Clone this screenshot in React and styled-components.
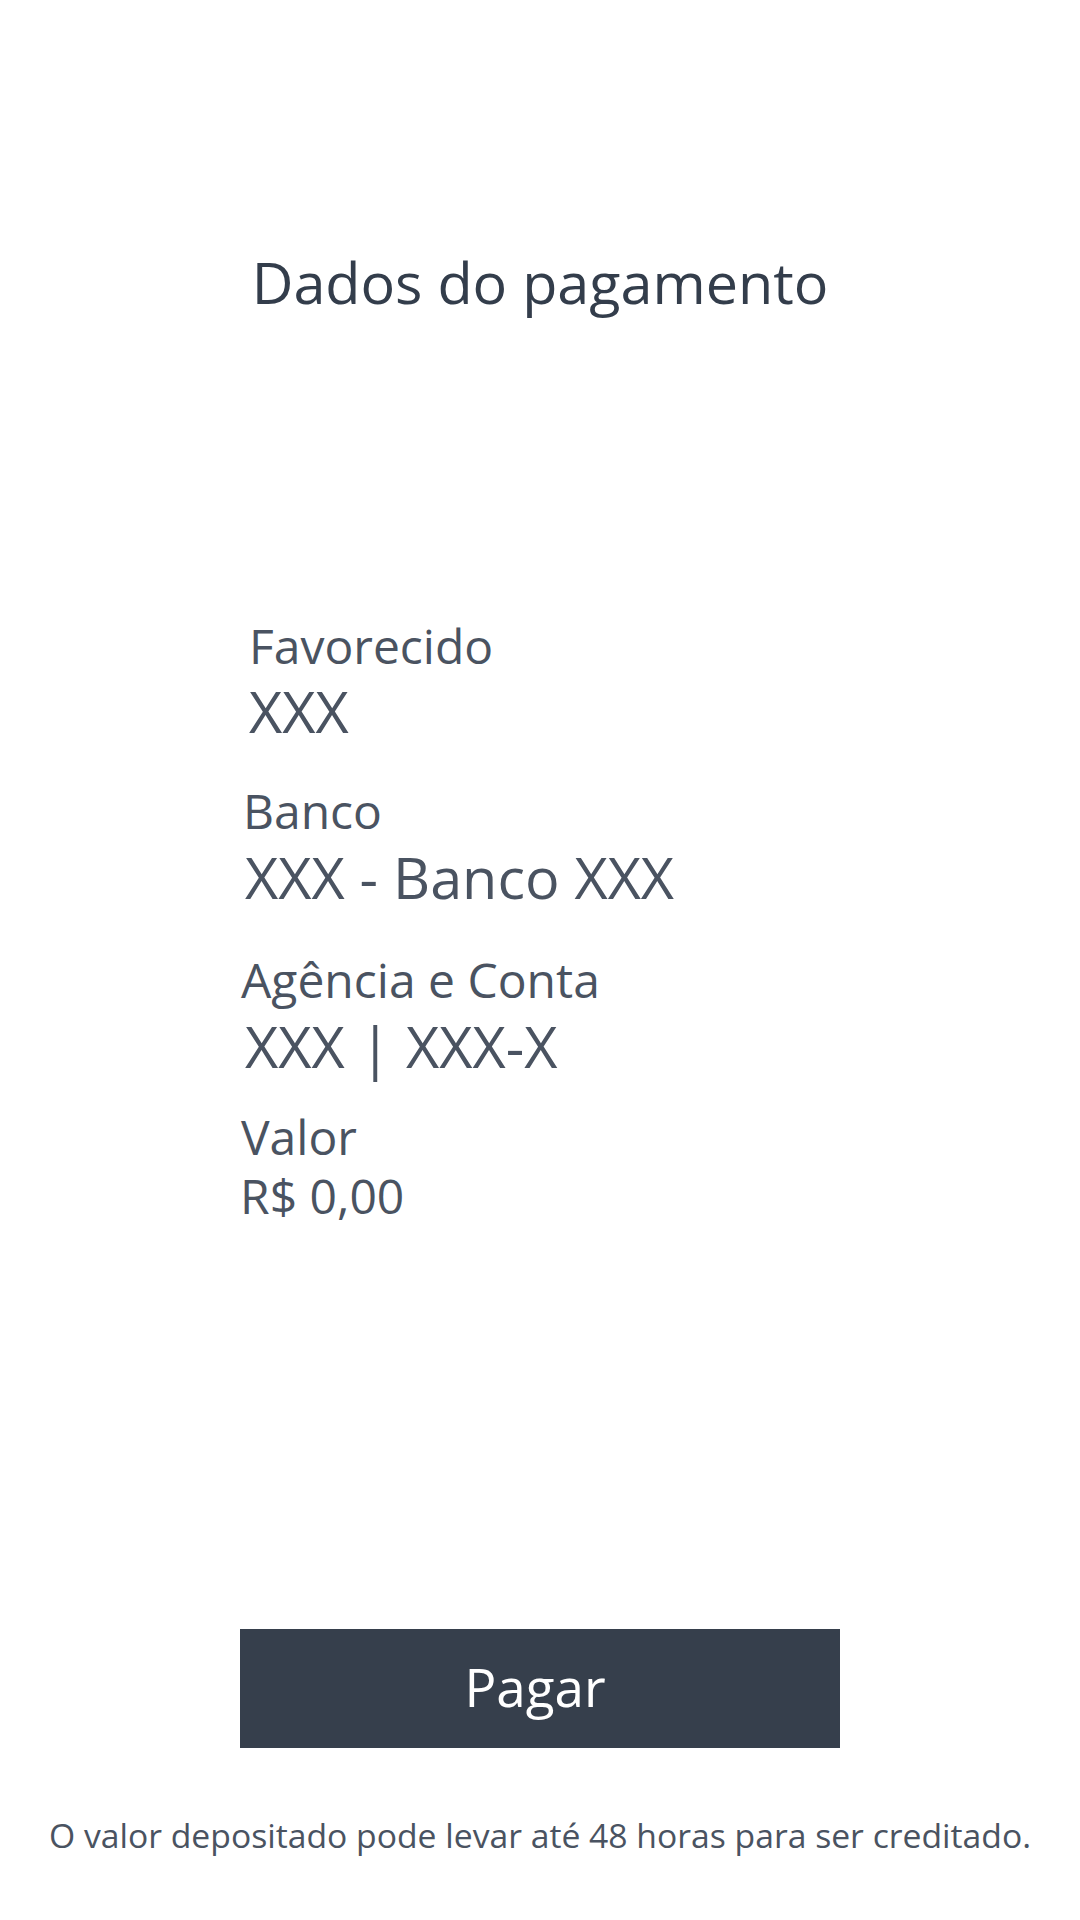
import React from "react";
import styled, { createGlobalStyle } from "styled-components";

const Global = createGlobalStyle`
  html, body { margin: 0; padding: 0; background: #ffffff; }
  body { font-family: "Open Sans", "Noto Sans", sans-serif; }
`;

const Page = styled.div`
  width: 1080px;
  height: 1920px;
  display: flex;
  flex-direction: column;
  align-items: center;
  box-sizing: border-box;
  padding-top: 254px;
`;

const Title = styled.h1`
  margin: 0;
  font-size: 57.5px;
  line-height: 1;
  font-weight: 400;
  color: #333d4b;
`;

const Details = styled.div`
  width: 600px;
  margin-top: 310px;
  display: flex;
  flex-direction: column;
`;

const Field = styled.div`
  display: flex;
  flex-direction: column;
  margin-top: ${(p) => p.$gap || 0}px;
`;

const Label = styled.div`
  font-size: 48px;
  line-height: 1;
  color: #4a5361;
  padding-left: ${(p) => p.$indent || 0}px;
`;

const Value = styled.div`
  font-size: ${(p) => p.$size || 57.5}px;
  line-height: 1;
  color: #4a5361;
  margin-top: ${(p) => p.$top || 13.5}px;
  padding-left: ${(p) => p.$indent || 0}px;
  white-space: pre;
`;

const PayButton = styled.button`
  margin-top: 408.6px;
  width: 600px;
  height: 119px;
  border: none;
  border-radius: 0;
  background: #363f4c;
  color: #ffffff;
  font-family: "Open Sans", "Noto Sans", sans-serif;
  font-size: 53px;
  font-weight: 400;
  padding: 0 10px 3px 0;
  cursor: pointer;
`;

const Note = styled.p`
  margin: 70.8px 0 0;
  font-size: 33.7px;
  line-height: 1;
  color: #4a5361;
  white-space: nowrap;
`;

export default function App() {
  return (
    <>
      <Global />
      <Page>
        <Title>Dados do pagamento</Title>
        <Details>
          <Field>
            <Label $indent={9}>Favorecido</Label>
            <Value $indent={9}>XXX</Value>
          </Field>
          <Field $gap={46.9}>
            <Label $indent={3}>Banco</Label>
            <Value $indent={5}>XXX - Banco XXX</Value>
          </Field>
          <Field $gap={49.9}>
            <Label $indent={1}>Agência e Conta</Label>
            <Value $indent={5}>XXX | XXX-X</Value>
          </Field>
          <Field $gap={37.9}>
            <Label $indent={1}>Valor</Label>
            <Value $indent={0} $top={11} $size={48}>R$ 0,00</Value>
          </Field>
        </Details>
        <PayButton>Pagar</PayButton>
        <Note>O valor depositado pode levar até 48 horas para ser creditado.</Note>
      </Page>
    </>
  );
}
